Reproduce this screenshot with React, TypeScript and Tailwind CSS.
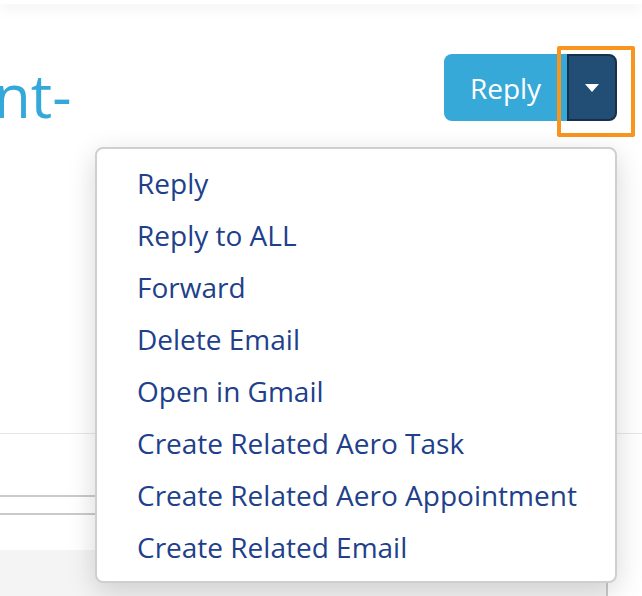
import React from 'react';

const items = [
  'Reply',
  'Reply to ALL',
  'Forward',
  'Delete Email',
  'Open in Gmail',
  'Create Related Aero Task',
  'Create Related Aero Appointment',
  'Create Related Email',
];

export default function App() {
  return (
    <div
      className="relative w-[642px] h-[596px] overflow-hidden bg-white"
      style={{ fontFamily: '"Open Sans", "Noto Sans", sans-serif' }}
    >
      {/* header edge with shadow */}
      <div className="relative z-10 h-[4px] bg-white shadow-[0_3px_14px_rgba(0,0,0,0.12)]" />

      {/* title + actions */}
      <div className="flex items-start justify-between pt-[50px] pr-[25px]">
        <h1 className="-ml-[6px] mt-[11px] text-[60px] leading-none font-normal text-[#34a8d8] whitespace-nowrap">
          nt-
        </h1>
        <div className="flex">
          <button className="w-[123px] h-[67px] rounded-l-[8px] bg-[#36a9d9] text-white text-[28px] leading-none">
            Reply
          </button>
          <div className="relative">
            <button className="flex items-center justify-center w-[50px] h-[67px] rounded-r-[8px] bg-[#224d74] border-2 border-[#17314b]">
              <svg width="14" height="8" viewBox="0 0 14 8">
                <path d="M0 0h14L7 8z" fill="#ffffff" />
              </svg>
            </button>
            <div className="absolute -left-[10px] -top-[8px] w-[78px] h-[91px] border-4 border-[#f8951d] rounded-[2px]" />
          </div>
        </div>
      </div>

      {/* content behind the menu */}
      <div className="h-[309px] border-b border-[#e7e7e7]" />
      <div className="h-[61px]" />
      <div className="w-[608px] border-t-2 border-r-2 border-[#cacaca]">
        <div className="h-[16px]" />
        <div className="h-[37px] border-t-2 border-[#cacaca]" />
        <div className="h-[60px] bg-[#f4f4f4]" />
      </div>

      {/* dropdown menu */}
      <div className="absolute left-[95px] top-[147px] w-[522px] rounded-[8px] border-2 border-[#cfcfcf] bg-white py-[8px] shadow-[0_8px_28px_rgba(0,0,0,0.16)]">
        {items.map((label) => (
          <div key={label} className="pl-[40px] text-[28px] leading-[52px] text-[#213f8a] whitespace-nowrap">
            {label}
          </div>
        ))}
      </div>
    </div>
  );
}
